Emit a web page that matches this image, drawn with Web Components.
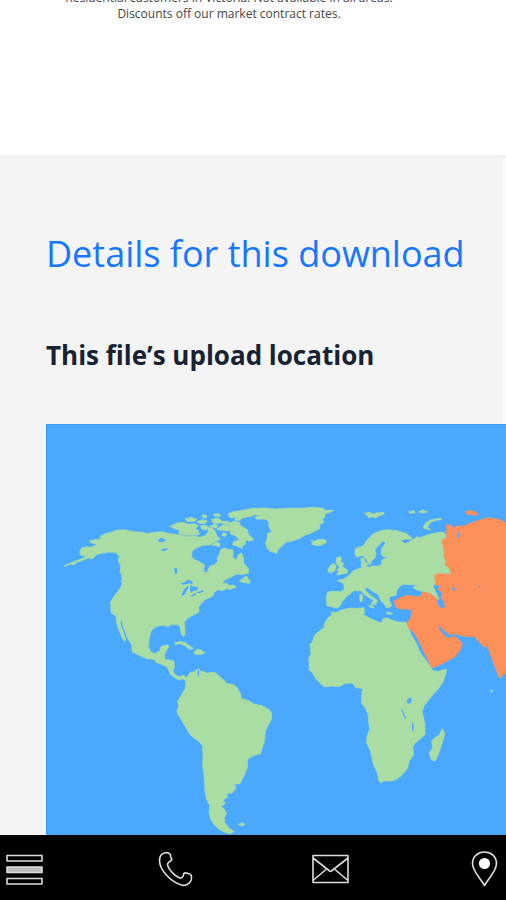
<!DOCTYPE html>
<html lang="en">
<head>
<meta charset="utf-8">
<meta name="viewport" content="width=device-width, initial-scale=1">
<title>Details for this download</title>
<style>
  body {
    margin: 0;
    background: #fff;
    font-family: "Open Sans", "Noto Sans", sans-serif;
  }
</style>
</head>
<body>
<app-shell>
  <offer-terms>
    Residential customers in Victoria. Not available in all areas.<br>
    Discounts off our market contract rates.
  </offer-terms>
  <download-details>
    <span slot="title">Details for this download</span>
    <span slot="subtitle">This file’s upload location</span>
    <world-map></world-map>
  </download-details>
  <contact-bar slot="footer"></contact-bar>
</app-shell>

<script>
class AppShell extends HTMLElement {
    connectedCallback() {
        this.attachShadow({ mode: 'open' });
        this.shadowRoot.innerHTML = `
      <style>
        :host {
          display: flex;
          flex-direction: column;
          height: 100vh;
          overflow: hidden;
        }
        main {
          display: flex;
          flex-direction: column;
          flex: 1;
          min-height: 0;
          overflow: hidden;
        }
      </style>
      <main><slot></slot></main>
      <slot name="footer"></slot>
    `;
    }
}
customElements.define('app-shell', AppShell);

class OfferTerms extends HTMLElement {
    connectedCallback() {
        this.attachShadow({ mode: 'open' });
        this.shadowRoot.innerHTML = `
      <style>
        :host {
          display: block;
          margin-top: -10px;
          padding: 0 48px 133px 0;
        }
        p {
          margin: 0;
          color: #444;
          font-family: "Open Sans", sans-serif;
          font-size: 12px;
          line-height: 16px;
          text-align: center;
        }
      </style>
      <p><slot></slot></p>
    `;
    }
}
customElements.define('offer-terms', OfferTerms);

class DownloadDetails extends HTMLElement {
    connectedCallback() {
        this.attachShadow({ mode: 'open' });
        this.shadowRoot.innerHTML = `
      <style>
        :host {
          display: block;
          flex: 1;
          background: linear-gradient(#f4f4f4, #f4f4f4) no-repeat 0 0 / calc(100% - 3px) 100%, #fbfbfb;
        }
        section {
          padding: 72px 0 0 46px;
          border-top: 3px solid #eef0f0;
        }
        h2, h3 {
          margin: 0;
          white-space: nowrap;
        }
        h2 {
          color: #1677ff;
          font-size: 36px;
          font-weight: 400;
          line-height: 48px;
        }
        h3 {
          margin: 60px 0 52px;
          color: #172333;
          font-size: 26px;
          font-weight: 700;
          line-height: 34px;
        }
      </style>
      <section>
        <h2><slot name="title"></slot></h2>
        <h3><slot name="subtitle"></slot></h3>
        <slot></slot>
      </section>
    `;
    }
}
customElements.define('download-details', DownloadDetails);

class WorldMap extends HTMLElement {
    connectedCallback() {
        this.attachShadow({ mode: 'open' });
        this.shadowRoot.innerHTML = `
      <style>
        :host {
          display: block;
          background: #4aa9ff;
          box-shadow: inset 1px 1px 0 #3b98e8;
        }
        svg {
          display: block;
          width: 100%;
        }
        .land {
          fill: #aadda3;
          stroke: #aadda3;
        }
        .asia {
          fill: #fd8f5b;
          stroke: #fd8f5b;
        }
        .land, .asia {
          stroke-width: 2;
          stroke-linejoin: round;
        }
        .water {
          fill: #4aa9ff;
        }
      </style>
      <svg viewBox="0 0 1380 1260" role="img" aria-label="World map with Asia highlighted">
        <!-- North America -->
        <g transform="translate(0 198)">
          <path class="land" d="M100 185L108 173 124 170 135 172 154 163 137 159 130 153 146 149 166 147 161 140 178 131 198 126 210 121 236 119 262 125 290 127 303 131 325 127 348 125 372 131 400 134 421 140 444 138 460 142 478 137 486 126 486 112 499 114 508 124 512 136 523 148 505 156 494 164 470 166 451 174 438 184 437 200 447 209 462 216 476 225 473 237 475 247 484 247 487 237 493 228 505 224 515 214 513 204 520 193 525 178 536 173 548 179 560 178 562 191 559 202 570 209 578 193 586 188 592 202 593 219 607 235 608 249 590 254 573 252 553 262 537 270 528 281 541 279 549 286 565 286 570 292 553 298 541 296 530 302 515 299 504 308 501 318 486 325 475 330 464 343 458 351 459 366 444 374 425 385 415 397 417 414 417 434 411 439 405 429 402 409 394 404 377 403 365 410 354 406 338 407 324 414 314 426 309 449 307 470 315 486 326 491 340 484 345 469 365 464 369 471 360 484 355 497 357 508 372 511 384 513 385 532 381 545 389 555 400 560 412 556 424 564 418 572 410 566 399 571 387 563 373 553 367 538 362 530 345 522 332 518 324 508 303 506 286 499 259 486 257 464 244 443 238 426 231 409 228 394 222 392 225 409 233 430 239 449 235 455 226 438 217 416 212 396 210 378 195 369 194 336 205 317 219 300 229 282 225 273 232 260 222 247 224 229 217 213 220 199 210 188 190 186 167 190 151 194 140 207 127 204 115 209 92 217 86 224 73 223 55 229 58 225 76 218 90 212 112 204 120 198 105 196Z"/>
          <path class="land" d="M372 109L395 98 414 98 427 103 444 101 457 107 447 115 456 120 460 134 443 136 419 136 397 130 401 121 385 116ZM417 87L434 82 452 87 446 94 426 95ZM452 95L468 89 484 92 478 100 463 101ZM468 76L480 75 483 82 472 84ZM464 107L479 106 489 113 478 121 466 116ZM502 72L519 71 524 78 509 80ZM496 88L517 84 527 94 548 94 543 101 522 99 503 101ZM546 73L558 66 590 61 620 55 665 54 665 64 634 67 618 79 592 83 581 91 567 91 568 83 553 83ZM491 109L506 103 516 106 511 114ZM512 118L528 106 538 103 552 111 560 101 577 102 591 111 604 119 608 133 622 148 610 153 599 150 598 163 588 168 589 176 574 169 560 165 563 154 580 151 570 138 554 132 551 121 540 123 526 121ZM530 129L542 130 538 140 529 137ZM498 166L511 155 523 162 519 170 507 166ZM542 100L568 94 584 98 577 104 549 107ZM583 271L601 258 612 273 611 280 597 278 581 275ZM386 460L400 454 417 457 428 466 443 476 430 478 417 467 402 461 388 464ZM444 487L453 478 465 480 477 489 462 494 446 492ZM227 256L236 262 237 278 229 272Z"/>
          <path class="water" d="M336 150L346 143 361 151 350 157 338 156ZM344 180L360 174 367 178 352 184ZM384 235L393 235 394 249 387 252ZM403 281L416 277 425 269 438 273 440 285 431 280 413 284ZM407 316L413 299 426 287 427 294 416 313 409 319ZM433 286L447 291 456 290 453 302 441 302 435 310 432 301ZM434 317L448 310 451 314 438 320ZM451 309L469 301 475 304 460 310Z"/>
        </g>
        <!-- South America -->
        <g transform="translate(342 678)">
          <path class="land" d="M77 86L87 73 91 67 103 65 110 58 118 57 121 64 134 65 139 69 164 67 174 74 184 85 193 91 200 101 217 103 228 109 234 118 241 130 244 146 255 149 267 152 281 162 307 167 320 175 330 182 335 189 334 209 324 227 317 241 315 258 313 277 307 292 302 311 285 315 266 325 262 334 263 352 253 375 247 388 240 401 225 402 218 399 228 409 226 418 216 429 201 431 203 442 189 450 196 460 184 470 193 478 200 490 193 502 194 516 202 528 210 536 223 544 210 551 193 547 174 536 160 521 152 507 147 487 149 466 139 447 134 415 134 395 131 370 128 348 129 311 127 287 118 275 94 258 82 240 70 220 63 208 53 191 51 181 56 174 53 153 60 143 68 128 75 117 77 104ZM235 523L248 518 255 523 245 528Z"/>
          <path class="water" d="M113 59L117 60 117 77 112 77Z"/>
        </g>
        <!-- Greenland, Iceland and Europe -->
        <g transform="translate(612 198)">
          <path class="land" d="M0 60L34 55 80 57 118 54 150 55 190 52 221 55 222 61 252 61 242 67 225 71 225 80 217 89 222 97 208 105 210 115 197 122 182 130 166 135 148 146 125 154 108 156 96 169 85 178 80 190 61 184 51 175 47 159 52 144 53 130 66 125 57 112 56 93 43 87 20 88 14 82 36 76 16 75 0 72ZM182 151L193 154 207 148 225 149 230 156 218 164 200 167 184 162 190 157ZM0 140L11 149 0 153ZM343 70L359 67 370 73 381 68 402 67 401 73 388 77 377 84 369 80 356 83 350 75ZM475 65L492 62 496 68 480 70ZM506 66L517 60 533 66 519 69ZM520 112L528 98 542 90 572 84 575 88 548 94 538 101 532 112 543 120 525 116ZM259 204L270 199 275 206 271 214 280 219 278 230 293 241 292 249 276 252 259 255 266 245 261 239 269 230 261 224 258 214ZM235 236L242 226 251 220 258 228 254 243 238 249 234 244Z"/>
          <path class="land" d="M262 271L280 268 291 261 300 253 309 243 326 236 334 233 334 215 332 206 343 202 343 213 356 223 345 228 355 232 367 228 382 228 394 225 394 212 404 204 419 201 399 199 393 192 394 177 407 158 399 153 386 166 375 179 378 194 374 205 366 210 360 224 352 214 347 204 339 196 319 202 315 190 316 175 338 169 351 151 364 136 376 128 397 121 417 119 440 122 466 129 482 140 487 147 467 148 454 152 464 160 478 154 492 147 500 140 510 143 529 136 552 130 566 127 581 127 592 139 579 153 583 178 582 201 590 214 584 225 604 230 610 253 591 251 564 253 554 259 558 278 549 288 557 305 568 328 548 318 530 308 516 304 503 301 489 293 498 284 481 284 465 283 455 285 446 293 440 303 438 316 420 320 417 329 425 347 418 353 408 352 402 341 391 330 386 314 371 306 352 292 343 296 354 310 369 322 382 331 377 344 362 342 371 331 355 322 341 311 334 303 311 302 298 313 286 324 276 335 270 347 262 355 246 351 231 347 229 323 233 306 250 304 273 305 283 298 281 281ZM329 315L337 312 338 333 330 335ZM359 345L371 349 372 355 357 350ZM410 366L427 369 427 373 411 371Z"/>
          <path class="water" d="M454 151L472 149 481 154 464 159Z"/>
        </g>
        <!-- Africa and Madagascar -->
        <g transform="translate(732 498)">
          <path class="land" d="M125 66L137 68 154 60 181 54 203 55 221 53 224 61 221 74 240 85 267 97 276 98 279 86 292 84 307 91 326 96 347 97 354 108 365 137 378 158 391 188 405 208 422 231 429 242 445 244 469 237 468 250 458 278 444 298 425 318 411 336 402 348 396 365 401 385 405 402 405 434 388 449 375 460 368 471 371 496 358 512 352 536 335 556 320 568 306 573 283 573 272 578 266 571 262 548 251 526 245 501 241 482 230 459 231 440 239 417 236 397 235 375 227 355 215 341 214 322 217 300 214 294 199 294 186 279 166 280 148 290 123 288 103 291 90 280 76 264 67 248 57 239 58 218 56 207 63 190 60 163 67 156 73 137 83 127 102 113 104 99 114 83 126 75ZM456 416L463 426 463 437 454 468 444 495 436 512 424 510 418 489 427 475 425 452 436 442 449 434Z"/>
          <path class="water" d="M352 329L360 322 365 325 363 338 354 342 350 336ZM333 358L338 361 349 386 344 384ZM366 395L371 402 370 427 366 419Z"/>
        </g>
        <!-- Asia -->
        <g transform="translate(612 198)">
          <path class="asia" d="M590 104L601 105 612 114 622 107 640 109 665 98 690 90 714 83 748 88 768 100 768 550 759 551 755 563 748 563 742 550 735 530 726 508 719 485 712 469 702 471 687 455 674 440 655 440 633 437 615 431 599 435 594 429 579 419 569 404 565 408 571 423 589 442 600 444 614 438 623 446 637 460 630 481 615 500 584 517 550 533 543 530 530 501 519 481 507 454 490 426 475 414 471 397 482 385 487 361 470 356 456 358 439 353 432 334 450 323 473 316 498 320 513 319 516 307 537 309 552 319 562 327 563 344 573 355 586 353 582 336 573 322 577 309 565 298 571 286 557 285 554 254 572 251 604 253 597 232 585 224 589 212 582 200 583 181 575 152 590 142ZM647 64L666 62 684 70 680 76 650 72Z"/>
          <path class="water" d="M621 119L628 130 629 145 622 142 624 134ZM607 293L613 291 616 301 609 302ZM686 286L691 287 690 293 686 292Z"/>
          <path class="land" d="M722 600L726 599 727 605 724 607Z"/>
        </g>
      </svg>
    `;
    }
}
customElements.define('world-map', WorldMap);

class ContactBar extends HTMLElement {
    connectedCallback() {
        this.attachShadow({ mode: 'open' });
        this.shadowRoot.innerHTML = `
      <style>
        :host {
          display: block;
          background: #000;
        }
        nav {
          display: flex;
          justify-content: space-between;
          align-items: center;
          padding: 14px 2px 11px 5px;
        }
        a, button {
          display: block;
          margin: 0;
          padding: 0;
          border: 0;
          background: none;
          cursor: pointer;
        }
        svg {
          display: block;
          width: 40px;
          height: 40px;
          fill: none;
          stroke: #ddd;
          stroke-width: 1.6;
          stroke-linejoin: round;
        }
      </style>
      <nav>
        <button type="button" aria-label="Menu">
          <svg viewBox="0 0 40 40">
            <path d="M2 6.500h35v5.500h-35zM2 29.500h35v5.500h-35z"/>
            <path d="M2 18h35v5.500h-35z" fill="#bbb"/>
          </svg>
        </button>
        <a href="tel:" aria-label="Phone">
          <svg viewBox="0 0 40 40">
            <path d="M6.500 4C9.500 3 12 4 12.600 6.500C12.200 8 13.500 9 13.800 10.500C13 12 10.500 13 9.500 15C9.500 19 16.500 27.500 22.500 29.200C24.500 28.800 25.500 27 25.800 24.500C28 23 29 24.500 31 24.800C33.500 25.500 34 28 33.200 31C32 34.500 28 37.300 23.500 36C12 32.500 2 21 1.500 12C1.500 7.500 3.500 4.500 6.500 4Z"/>
          </svg>
        </a>
        <a href="mailto:" aria-label="Email">
          <svg viewBox="0 0 40 40">
            <path d="M2 6.500h35v27h-35zM2 9L18 21.500Q19.500 23.500 21 21.500L37 9M2 31.500L15 20.500M37 31.500L24 20.500"/>
          </svg>
        </a>
        <a href="#location" aria-label="Location">
          <svg viewBox="0 0 40 40">
            <path d="M20.500 36.500C16.500 29.500 8.500 22 8.500 14.500C8.500 7.500 14 3 20.500 3S32.500 7.500 32.500 14.500C32.500 22 24.500 29.500 20.500 36.500Z"/>
            <circle cx="20.500" cy="14.500" r="4.800" fill="#fff" stroke="#fff"/>
          </svg>
        </a>
      </nav>
    `;
    }
}
customElements.define('contact-bar', ContactBar);
</script>
</body>
</html>
